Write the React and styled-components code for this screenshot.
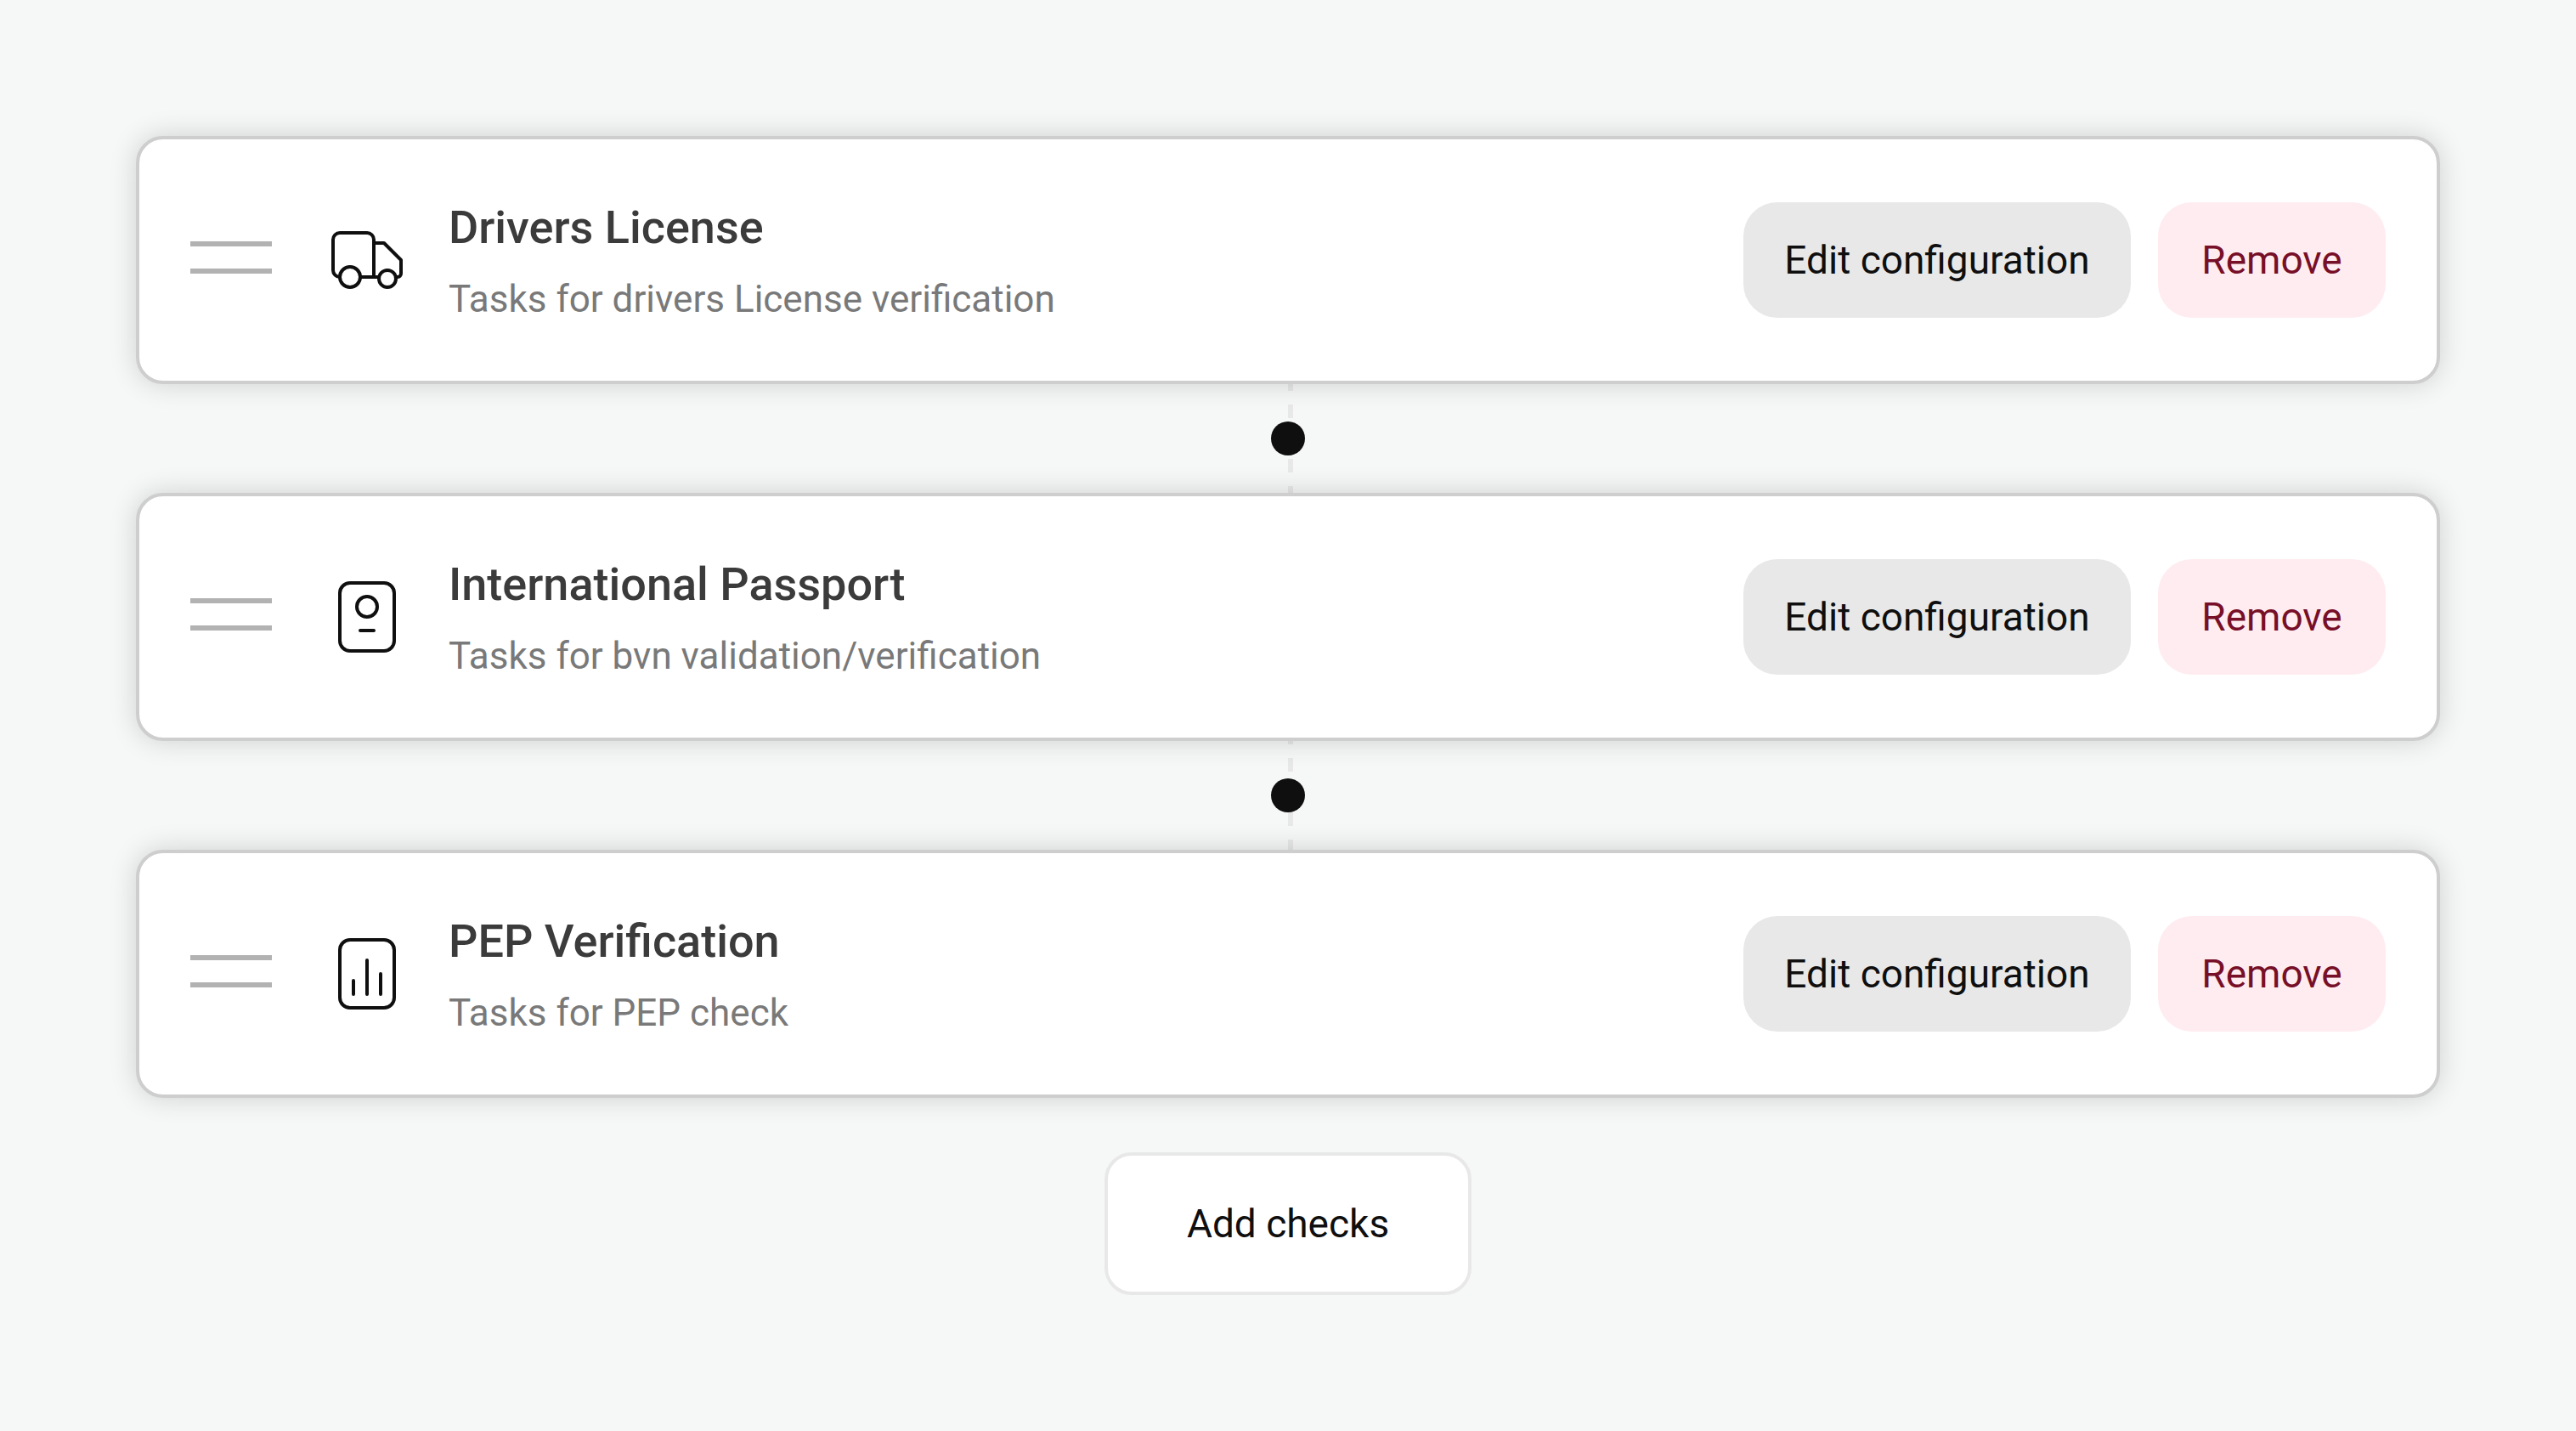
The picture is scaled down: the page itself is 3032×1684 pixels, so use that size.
import styled, { createGlobalStyle } from "styled-components";

const checks = [
    {
        id: "drivers-license",
        title: "Drivers License",
        content: "Tasks for drivers License verification",
        icon: "truck",
    },
    {
        id: "passport",
        title: "International Passport",
        content: "Tasks for bvn validation/verification",
        icon: "passport",
    },
    {
        id: "pep",
        title: "PEP Verification",
        content: "Tasks for PEP check",
        icon: "chart",
    },
];

const icons = {
    truck: (
        <>
            <path d="M16 68a8 8 0 0 1-8-8V24a8 8 0 0 1 8-8h32a8 8 0 0 1 8 8v44" />
            <path d="M40 68h22M56 28h12l20 20v16a4 4 0 0 1-4 4h-2" />
            <circle cx="28" cy="68" r="12" />
            <circle cx="72" cy="70" r="10" />
        </>
    ),
    passport: (
        <>
            <rect x="16" y="8" width="64" height="80" rx="12" />
            <circle cx="48" cy="36" r="12" />
            <path d="M40 64h16" />
        </>
    ),
    chart: (
        <>
            <rect x="16" y="8" width="64" height="80" rx="12" />
            <path d="M32 56v16M48 32v40M64 48v24" />
        </>
    ),
};

const CheckCard = ({ check }) => {
    return (
        <StCard>
            <StHandle type="button" aria-label={`Move ${check.title}`}>
                <StHandleBar />
                <StHandleBar />
            </StHandle>
            <StIcon viewBox="0 0 96 96" aria-hidden="true">
                {icons[check.icon]}
            </StIcon>
            <StCardText>
                <StTitle>{check.title}</StTitle>
                <StContent>{check.content}</StContent>
            </StCardText>
            <StCardBtnWrap>
                <StButton type="button" $width="456px">
                    Edit configuration
                </StButton>
                <StButton type="button" $width="268px" $danger>
                    Remove
                </StButton>
            </StCardBtnWrap>
        </StCard>
    );
};

const App = () => {
    return (
        <>
            <GlobalStyle />
            <StPage>
                <StList>
                    {checks.map((check) => (
                        <StListItem key={check.id}>
                            <CheckCard check={check} />
                        </StListItem>
                    ))}
                </StList>
                <StAddButton type="button">Add checks</StAddButton>
            </StPage>
        </>
    );
};

export default App;

const GlobalStyle = createGlobalStyle`
    * {
        box-sizing: border-box;
    }

    body {
        margin: 0;
        background-color: #f6f8f7;
        color: #0f0f0f;
        font-family: Roboto, "Liberation Sans", sans-serif;
    }

    button {
        font-family: inherit;
        cursor: pointer;
    }
`;

const StPage = styled.main`
    display: flex;
    flex-direction: column;
    align-items: center;
    gap: 64px;
    padding: 160px;
`;

/* the dashed line runs behind all of the cards */
const StList = styled.ol`
    position: relative;
    width: 100%;
    margin: 0;
    padding: 0;
    list-style: none;

    &::before {
        content: "";
        position: absolute;
        top: 28px;
        bottom: 0;
        left: 50%;
        width: 6px;
        background: repeating-linear-gradient(#e8e8e8 0 16px, transparent 16px 32px);
    }
`;

const StListItem = styled.li`
    position: relative;
    display: flex;
    flex-direction: column;
    align-items: center;

    & + &::before {
        content: "";
        width: 40px;
        height: 40px;
        margin: 44px 0;
        border-radius: 50%;
        background-color: #0f0f0f;
    }
`;

const StCard = styled.article`
    display: flex;
    align-items: center;
    width: 100%;
    min-height: 292px;
    padding: 24px 60px;
    border: 4px solid #cecece;
    border-radius: 32px;
    background-color: #fff;
    box-shadow: 0 0 32px rgba(0, 0, 0, 0.16);
`;

const StHandle = styled.button`
    display: flex;
    flex-direction: column;
    gap: 26px;
    width: 96px;
    margin-right: 64px;
    padding: 0 0 6px;
    border: 0;
    background: none;
`;

const StHandleBar = styled.span`
    width: 100%;
    height: 6px;
    background-color: #b2b2b2;
`;

const StIcon = styled.svg`
    flex: none;
    width: 96px;
    height: 96px;
    margin-right: 48px;
    fill: none;
    stroke: #0f0f0f;
    stroke-width: 4px;
    stroke-linecap: round;
    stroke-linejoin: round;
`;

const StCardText = styled.div`
    display: flex;
    flex: 1;
    flex-direction: column;
    gap: 12px;
`;

const StTitle = styled.h2`
    margin: 0;
    color: #3b3b3b;
    font-size: 54px;
    font-weight: 500;
    line-height: 80px;
`;

const StContent = styled.p`
    margin: 0;
    color: #797979;
    font-size: 44px;
    line-height: 64px;
`;

const StCardBtnWrap = styled.div`
    display: flex;
    gap: 32px;
`;

const StButton = styled.button`
    min-width: ${({ $width }) => $width};
    height: 136px;
    padding: 0 32px;
    border: 0;
    border-radius: 40px;
    background-color: ${({ $danger }) => ($danger ? "#ffecf0" : "#e8e8e8")};
    color: ${({ $danger }) => ($danger ? "#770f28" : "#0f0f0f")};
    font-size: 46px;
`;

const StAddButton = styled.button`
    min-width: 432px;
    height: 168px;
    padding: 0 64px;
    border: 4px solid #e8e8e8;
    border-radius: 32px;
    background-color: #fff;
    color: #0f0f0f;
    font-size: 46px;
`;
